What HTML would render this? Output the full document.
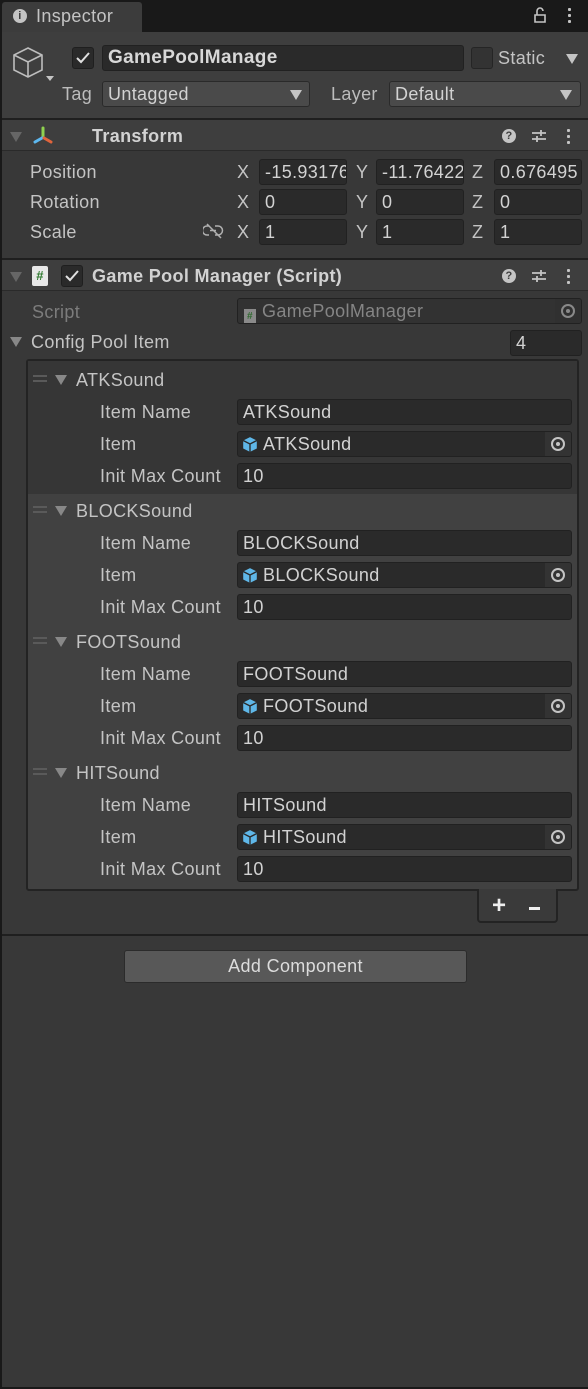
<!DOCTYPE html>
<html><head><meta charset="utf-8"><style>
*{margin:0;padding:0;box-sizing:border-box}
body{width:588px;height:1389px;background:#191919;font-family:"Liberation Sans",sans-serif;font-size:18px;letter-spacing:0.35px;color:#c4c4c4;position:relative;overflow:hidden}
.a{position:absolute}
.t{position:absolute;line-height:20px;white-space:nowrap}
.f{position:absolute;background:#2a2a2a;border:1px solid #212121;border-radius:3px;height:26px;line-height:24px;padding-left:5px;color:#d2d2d2;overflow:hidden;white-space:nowrap}
.tri{position:absolute;width:0;height:0;border-left:6px solid transparent;border-right:6px solid transparent;border-top:10px solid #888}
.dot{position:absolute;width:3px;height:3px;background:#c4c4c4;border-radius:1px}
.sep{position:absolute;left:2px;right:0;height:2px;background:#1f1f1f}
.cube{display:inline-block;width:16px;height:17px;vertical-align:-3px;margin-right:5px}
.tgt{position:absolute;right:0;top:0;width:26px;height:24px;background:#333}
.tgt:after{content:"";position:absolute;left:6px;top:5px;width:10px;height:10px;border:2px solid #c4c4c4;border-radius:50%}
.tgt:before{content:"";position:absolute;left:11px;top:10px;width:4px;height:4px;background:#c4c4c4;border-radius:50%;z-index:1}
</style></head><body>
<div class="a" style="left:0;top:0;width:588px;height:32px;background:#191919"></div>
<div class="a" style="left:2px;top:2px;width:140px;height:30px;background:#3c3c3c;border-radius:3px 3px 0 0"></div>
<div class="a" style="left:13px;top:9px;width:14px;height:14px;border-radius:50%;background:#c4c4c4;color:#3c3c3c;font-size:11px;font-weight:bold;text-align:center;line-height:14px">i</div>
<div class="t" style="left:36px;top:6px;font-size:18px">Inspector</div>
<svg class="a" style="left:532px;top:6px" width="16" height="18"><path d="M3 9h10v7H3z M5 9V5a3 3 0 0 1 6 0" fill="none" stroke="#c4c4c4" stroke-width="1.6"/></svg>
<div class="dot" style="left:568px;top:8px"></div><div class="dot" style="left:568px;top:14px"></div><div class="dot" style="left:568px;top:20px"></div>
<div class="a" style="left:2px;top:32px;width:586px;height:1355px;background:#383838"></div>
<div class="a" style="left:2px;top:32px;width:586px;height:86px;background:#3e3e3e"></div>
<svg class="a" style="left:10px;top:44px" width="46" height="44"><path d="M18 4l14 7v15l-14 7-14-7V11z M4 11l14 7 14-7 M18 18v15" fill="none" stroke="#bdbdbd" stroke-width="1.6"/><path d="M36 32h8l-4 5z" fill="#c4c4c4"/></svg>
<div class="a" style="left:72px;top:47px;width:22px;height:22px;background:#2a2a2a;border:1px solid #1f1f1f;border-radius:3px"></div>
<svg class="a" style="left:75px;top:51px" width="16" height="14"><path d="M2 7l4 4 8-9" fill="none" stroke="#e0e0e0" stroke-width="2"/></svg>
<div class="f" style="left:102px;top:45px;width:362px;height:26px;font-size:19px;font-weight:bold;color:#d8d8d8">GamePoolManage</div>
<div class="a" style="left:471px;top:47px;width:22px;height:22px;background:#333;border:1px solid #252525;border-radius:3px"></div>
<div class="t" style="left:498px;top:48px">Static</div>
<div class="tri" style="left:566px;top:54px;border-top-color:#c4c4c4"></div>
<div class="t" style="left:62px;top:84px;color:#bcbcbc">Tag</div>
<div class="f" style="left:102px;top:81px;background:#4a4a4a;border-color:#2a2a2a;width:208px">Untagged</div>
<div class="tri" style="left:290px;top:90px;border-top-color:#c4c4c4"></div>
<div class="t" style="left:331px;top:84px;color:#bcbcbc">Layer</div>
<div class="f" style="left:389px;top:81px;width:192px;background:#4a4a4a;border-color:#2a2a2a">Default</div>
<div class="tri" style="left:560px;top:90px;border-top-color:#c4c4c4"></div>
<div class="sep" style="top:118px"></div>
<div class="a" style="left:2px;top:120px;width:586px;height:30px;background:#3e3e3e"></div>
<div class="a" style="left:2px;top:150px;width:586px;height:1px;background:#2a2a2a"></div>
<div class="tri" style="left:10px;top:132px;border-top-color:#666"></div>
<svg class="a" style="left:31px;top:125px" width="24" height="22"><path d="M12 3v9" stroke="#8fd14f" stroke-width="3" stroke-linecap="round"/><path d="M11 13l-7 4" stroke="#5db8f0" stroke-width="3" stroke-linecap="round"/><path d="M13 13l7 4" stroke="#e0643c" stroke-width="3" stroke-linecap="round"/></svg>
<div class="t" style="left:92px;top:126px;font-weight:bold;color:#d2d2d2">Transform</div>
<div class="a" style="left:502px;top:129px;width:14px;height:14px;border-radius:50%;background:#c4c4c4;color:#3e3e3e;font-size:11px;font-weight:bold;text-align:center;line-height:14px">?</div>
<svg class="a" style="left:530px;top:128px" width="18" height="16"><path d="M2 5h14 M2 11h14 M11 2v6 M7 8v6" stroke="#c4c4c4" stroke-width="1.8"/></svg>
<div class="dot" style="left:567px;top:129px"></div><div class="dot" style="left:567px;top:135px"></div><div class="dot" style="left:567px;top:141px"></div>
<div class="t" style="left:30px;top:162px">Position</div>
<div class="t" style="left:30px;top:192px">Rotation</div>
<div class="t" style="left:30px;top:222px">Scale</div>
<svg class="a" style="left:203px;top:222px" width="22" height="18"><path d="M6 4h-2a4 4 0 0 0 0 9h2 M12 4h3a4 4 0 0 1 0 9h-3 M7 8.5h6 M4 2l14 14" fill="none" stroke="#b0b0b0" stroke-width="1.5"/></svg>
<div class="t" style="left:237px;top:162px">X</div><div class="t" style="left:356px;top:162px">Y</div><div class="t" style="left:472px;top:162px">Z</div>
<div class="t" style="left:237px;top:192px">X</div><div class="t" style="left:356px;top:192px">Y</div><div class="t" style="left:472px;top:192px">Z</div>
<div class="t" style="left:237px;top:222px">X</div><div class="t" style="left:356px;top:222px">Y</div><div class="t" style="left:472px;top:222px">Z</div>
<div class="f" style="left:259px;top:159px;width:88px">-15.93176</div>
<div class="f" style="left:376px;top:159px;width:88px">-11.76422</div>
<div class="f" style="left:494px;top:159px;width:88px">0.676495</div>
<div class="f" style="left:259px;top:189px;width:88px">0</div>
<div class="f" style="left:376px;top:189px;width:88px">0</div>
<div class="f" style="left:494px;top:189px;width:88px">0</div>
<div class="f" style="left:259px;top:219px;width:88px">1</div>
<div class="f" style="left:376px;top:219px;width:88px">1</div>
<div class="f" style="left:494px;top:219px;width:88px">1</div>
<div class="sep" style="top:258px"></div>
<div class="a" style="left:2px;top:260px;width:586px;height:30px;background:#3e3e3e"></div>
<div class="a" style="left:2px;top:290px;width:586px;height:1px;background:#2a2a2a"></div>
<div class="tri" style="left:10px;top:272px;border-top-color:#666"></div>
<div class="a" style="left:32px;top:266px;width:16px;height:20px;background:#e8e8e8;border-radius:2px;color:#2f7a2f;font-size:13px;font-weight:bold;text-align:center;line-height:20px">#</div>
<div class="a" style="left:61px;top:265px;width:22px;height:22px;background:#2a2a2a;border:1px solid #1f1f1f;border-radius:3px"></div>
<svg class="a" style="left:64px;top:269px" width="16" height="14"><path d="M2 7l4 4 8-9" fill="none" stroke="#e0e0e0" stroke-width="2"/></svg>
<div class="t" style="left:92px;top:266px;font-weight:bold;color:#d2d2d2">Game Pool Manager (Script)</div>
<div class="a" style="left:502px;top:269px;width:14px;height:14px;border-radius:50%;background:#c4c4c4;color:#3e3e3e;font-size:11px;font-weight:bold;text-align:center;line-height:14px">?</div>
<svg class="a" style="left:530px;top:268px" width="18" height="16"><path d="M2 5h14 M2 11h14 M11 2v6 M7 8v6" stroke="#c4c4c4" stroke-width="1.8"/></svg>
<div class="dot" style="left:567px;top:269px"></div><div class="dot" style="left:567px;top:275px"></div><div class="dot" style="left:567px;top:281px"></div>
<div class="t" style="left:32px;top:302px;color:#7c7c7c">Script</div>
<div class="f" style="left:237px;top:298px;width:345px;background:#323232;color:#858585;padding-left:6px"><span style="display:inline-block;width:12px;height:15px;background:#8a8a8a;color:#2f6a2f;font-size:10px;font-weight:bold;text-align:center;line-height:15px;vertical-align:-2px;margin-right:6px">#</span>GamePoolManager<div class="tgt" style="background:#303030;opacity:.6"></div></div>
<div class="tri" style="left:10px;top:337px"></div>
<div class="t" style="left:31px;top:332px">Config Pool Item</div>
<div class="f" style="left:510px;top:330px;width:72px">4</div>
<div class="a" style="left:26px;top:359px;width:553px;height:532px;background:#414141;border:2px solid #232323;border-radius:3px"></div>
<div class="a" style="left:28px;top:361px;width:549px;height:133px;background:#363636"></div>
<div id="items"></div>
<div class="a" style="left:477px;top:889px;width:81px;height:34px;background:#3a3a3a;border:2px solid #232323;border-top:none;border-radius:0 0 4px 4px"></div>
<div class="t" style="left:492px;top:896px;font-size:24px;font-weight:bold;color:#eee">+</div>
<div class="a" style="left:529px;top:907px;width:11px;height:3px;background:#eee"></div>
<div class="sep" style="top:934px"></div>
<div class="a" style="left:124px;top:950px;width:343px;height:33px;background:#585858;border:1px solid #2b2b2b;border-radius:3px;text-align:center;line-height:31px;color:#dcdcdc">Add Component</div>
<script>
var names=["ATKSound","BLOCKSound","FOOTSound","HITSound"],h="";
var cube='<svg class="cube" viewBox="0 0 14 15"><path d="M7 1l6 3v7l-6 3-6-3V4z" fill="#5fb7e8"/><path d="M1 4l6 3 6-3M7 7v7" stroke="#2a2a2a" stroke-width="1.2" fill="none"/></svg>';
names.forEach(function(n,i){var y=380+i*131;
h+='<div class="a" style="left:33px;top:'+(y-5)+'px;width:14px;height:2px;background:#5a5a5a"></div><div class="a" style="left:33px;top:'+(y)+'px;width:14px;height:2px;background:#5a5a5a"></div>';
h+='<div class="tri" style="left:55px;top:'+(y-5)+'px"></div>';
h+='<div class="t" style="left:76px;top:'+(y-10)+'px">'+n+'</div>';
h+='<div class="t" style="left:100px;top:'+(y+22)+'px">Item Name</div><div class="t" style="left:100px;top:'+(y+54)+'px">Item</div><div class="t" style="left:100px;top:'+(y+86)+'px">Init Max Count</div>';
h+='<div class="f" style="left:237px;top:'+(y+19)+'px;width:335px">'+n+'</div>';
h+='<div class="f" style="left:237px;top:'+(y+51)+'px;width:335px;padding-left:4px">'+cube+n+'<div class="tgt"></div></div>';
h+='<div class="f" style="left:237px;top:'+(y+83)+'px;width:335px">10</div>';});
document.getElementById("items").innerHTML=h;
</script>
</body></html>
